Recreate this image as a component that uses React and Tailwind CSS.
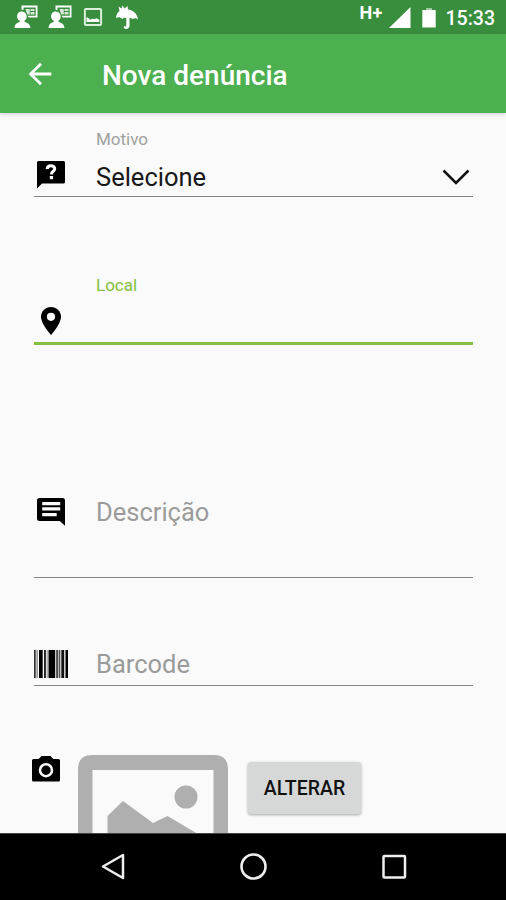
import { MdArrowBack } from "react-icons/md";

const ContactIcon = () => (
    <svg viewBox="0 0 24 25" className="w-6 h-[25px]" fill="#fff">
        <path d="M7.500 6.500c3 0 5.200 2.200 5.200 5 0 1.900-.8 3.400-2.200 4.300v1.300c3.200.8 5.600 2 6 6H.5c.3-4 2.500-5.200 5.200-6v-1.300c-1.600-.9-2.600-2.400-2.600-4.300 0-2.800 1.700-5 4.400-5z" />
        <path d="M7.500.5h16V12.500H14.500l-1-1.800h8.200V2.500H9.500V5l-2-.3z" />
        <path d="M11.500 4h4.300v5.500h-2.500l-1-2.500zM16.500 4h4v2h-4zM16.500 7h4v2.500h-4z" fillOpacity=".8" />
    </svg>
);

const PictureIcon = () => (
    <svg viewBox="0 0 20 20" className="w-5 h-5">
        <rect x="1.900" y="1.900" width="16.200" height="16" rx="1" fill="none" stroke="#dcefdc" strokeWidth="2" />
        <path d="M3.500 15v-5l2 1 2 1.800 2-1.300 1.500.8 2.500-1 2.800 1.500v2.200z" fill="#fff" />
    </svg>
);

const UmbrellaIcon = () => (
    <svg viewBox="0 0 24 25" className="w-6 h-[25px]" fill="#fff">
        <path d="M1 13c0-3.500 1.500-5.500 3.500-7L3.500 1.500 6.500 3.500 7.500.5l2 3L12.500 1l.5 3.500c5 .5 9.200 4 10 10-1.500-1.500-3.500-1.800-5.500-.5-1-1-2-1.300-3-.8v7.300c0 2.300-1.300 3.500-3.300 3.500-1.400 0-2.300-.6-2.700-1.700l1-1.300c.9.8 1.800.5 1.800-.5v-7.300c-1.500-.8-3-.5-4 .8C5.500 12 3 11.500 1 13z" />
    </svg>
);

const QuestionBubble = () => (
    <svg viewBox="0 0 28 28" className="w-7 h-7">
        <path d="M1.500 0h25Q28 0 28 1.500v19.500q0 1.500-1.500 1.500H5L0 27.500V1.500Q0 0 1.500 0z" />
        <path d="M10.200 8c0-4.500 7.500-4.200 7.500-.3 0 2.800-3.300 2.400-3.300 5.800" fill="none" stroke="#fff" strokeWidth="3" />
        <path d="M12.800 15h3.300v3.200h-3.300z" fill="#fff" />
    </svg>
);

const PinIcon = () => (
    <svg viewBox="0 0 20 28" className="w-5 h-7">
        <path d="M10 0C4.500 0 0 4.400 0 9.800 0 17 10 28 10 28s10-11 10-18.200C20 4.400 15.500 0 10 0z" />
        <circle cx="10" cy="9.800" r="4.100" fill="#fafafa" />
    </svg>
);

const CommentIcon = () => (
    <svg viewBox="0 0 28 28" className="w-7 h-7">
        <path d="M2.500 0h23Q28 0 28 2.500v25.300L22.800 23H2.500Q0 23 0 20.500v-18Q0 0 2.500 0z" />
        <path d="M5.200 4h18v3.200h-18zM5.200 9.300h18v3.200h-18zM5.200 15h14.500v3.200H5.200z" fill="#fafafa" />
    </svg>
);

const CameraIcon = () => (
    <svg viewBox="0 0 28 26" className="w-7 h-[26px]">
        <path d="M9.500 0h9l2.800 3H26.500Q28 3 28 4.500v19.500q0 1.500-1.500 1.500h-25Q0 25.500 0 24V4.500Q0 3 1.500 3h5.200z" />
        <circle cx="14" cy="14.200" r="6" fill="none" stroke="#fafafa" strokeWidth="2.600" />
    </svg>
);

// [x, width, color]
const bars = [
    [0, 1.7, "#333"],
    [2.500, 1.2, "#777"],
    [5, 3.700, "#000"],
    [10, 1.900, "#222"],
    [12.700, .9, "#888"],
    [14.500, 6.700, "#000"],
    [22.300, 1.500, "#222"],
    [24.600, 1.700, "#555"],
    [27.300, 2.900, "#111"],
    [31.500, 2.500, "#000"],
];

const BarcodeIcon = () => (
    <svg viewBox="0 0 34 28" className="w-[34px] h-7">
        {bars.map(([x, w, c]) => (
            <rect key={x} x={x} y="0" width={w} height="28" fill={c} />
        ))}
    </svg>
);

const StatusBar = () => (
    <div className="h-[34px] shrink-0 bg-[#388e3c] flex items-start text-white">
        <div className="flex items-start pl-[14px] pt-[5px]">
            <ContactIcon />
            <div className="ml-[10px]"><ContactIcon /></div>
            <div className="ml-[11px] mt-[2px]"><PictureIcon /></div>
            <div className="ml-[12px]"><UmbrellaIcon /></div>
        </div>
        <div className="ml-auto flex items-start pr-[11px]">
            <span className="text-[18px] leading-[20px] mt-[3px] font-bold tracking-[0.3px]">H+</span>
            <svg viewBox="0 0 22 22" className="w-[22px] h-[22px] mt-[7px] ml-[6px]" fill="#fff">
                <path d="M0 21 21.500 0v21z" />
            </svg>
            <svg viewBox="0 0 14 20" className="w-[14px] h-5 mt-[8px] ml-[11px]">
                <path d="M4 0h6v2H4z" fill="#9ccc9e" />
                <path d="M.3 2h13.400v17.500H.3z" fill="#fff" />
            </svg>
            <span className="text-[19.500px] leading-[24px] mt-[7px] ml-[10px] font-medium">15:33</span>
        </div>
    </div>
);

const AppBar = () => (
    <header className="h-[79px] shrink-0 bg-[#4caf50] text-white flex items-center shadow-[0_1px_4px_rgba(90,60,90,0.25)] z-10">
        <MdArrowBack className="w-[34px] h-[34px] ml-[23px]" />
        <h1 className="ml-[45px] mt-[5px] text-[28px] leading-[32px] font-medium">Nova denúncia</h1>
    </header>
);

const Form = () => (
    <main className="flex-1 min-h-0 overflow-hidden">
        <div className="mx-[34px] w-[439px]">
            <div className="h-[84px] border-b border-[#858585] flex">
                <div className="w-[62px] pt-[48px] pl-[3px]"><QuestionBubble /></div>
                <div className="flex-1">
                    <div className="text-[17px] leading-5 mt-4 text-[#a0a0a0]">Motivo</div>
                    <div className="text-[25.5px] leading-[30px] mt-[13px] text-[#181818]">Selecione</div>
                </div>
                <svg viewBox="0 0 28 17" className="w-7 h-[17px] mt-[56px] mr-[3px]">
                    <path d="m1.500 1.500 12.500 12.500L26.500 1.500" fill="none" stroke="#111" strokeWidth="2.500" />
                </svg>
            </div>

            <div className="h-[148px] border-b-[3px] border-[#84bf41] flex">
                <div className="w-[62px] pt-[110px] pl-[7px]"><PinIcon /></div>
                <div className="text-[17px] leading-5 mt-[78px] text-[#84bf41]">Local</div>
            </div>

            <div className="h-[233px] border-b border-[#858585] flex">
                <div className="w-[62px] pt-[153px] pl-[3px]"><CommentIcon /></div>
                <div className="text-[25.5px] leading-[30px] mt-[152px] text-[#9b9b9b]">Descrição</div>
            </div>

            <div className="h-[108px] border-b border-[#858585] flex">
                <div className="w-[62px] pt-[72px]"><BarcodeIcon /></div>
                <div className="text-[25.5px] leading-[30px] mt-[71px] text-[#9b9b9b]">Barcode</div>
            </div>
        </div>

        <div className="flex items-start pl-[32px]">
            <div className="mt-[70px]"><CameraIcon /></div>
            <svg viewBox="0 0 150 120" className="w-[150px] h-[120px] mt-[69px] ml-[18px]">
                <path d="M14 0h122q14 0 14 14v106H0V14Q0 0 14 0zM14.500 15v105h121V15z" fill="#afafaf" fillRule="evenodd" />
                <circle cx="108" cy="42" r="11.500" fill="#afafaf" />
                <path d="M29.500 120V61L45 46l30 22 14.500-7L120 79v41z" fill="#afafaf" />
            </svg>
            <button className="mt-[76px] ml-5 pt-[2px] w-[113px] h-[52px] rounded-[3px] bg-[#d6d8d7] text-[#111] text-[19.500px] font-medium shadow-[0_1px_3px_rgba(0,0,0,0.35)]">
                ALTERAR
            </button>
        </div>
    </main>
);

const NavBar = () => (
    <nav className="h-[67px] shrink-0 bg-black border-t border-[#444] flex items-center pl-[101px]">
        <svg viewBox="0 0 26 28" className="w-[26px] h-7" fill="none" stroke="#eee" strokeWidth="2.500" strokeLinejoin="round">
            <path d="M22 2v23L2 13.500z" />
        </svg>
        <svg viewBox="0 0 28 28" className="w-7 h-7 ml-[112px]" fill="none" stroke="#eee" strokeWidth="2.600">
            <circle cx="14.500" cy="13.500" r="12" />
        </svg>
        <svg viewBox="0 0 26 26" className="w-[26px] h-[26px] ml-[114px]" fill="none" stroke="#eee" strokeWidth="2.500">
            <rect x="2.500" y="2" width="21.500" height="21.500" rx="1" />
        </svg>
    </nav>
);

export default function App() {
    return (
        <div className="w-[506px] h-[900px] flex flex-col overflow-hidden bg-[#fafafa] font-['Roboto',sans-serif]">
            <StatusBar />
            <AppBar />
            <Form />
            <NavBar />
        </div>
    );
}
